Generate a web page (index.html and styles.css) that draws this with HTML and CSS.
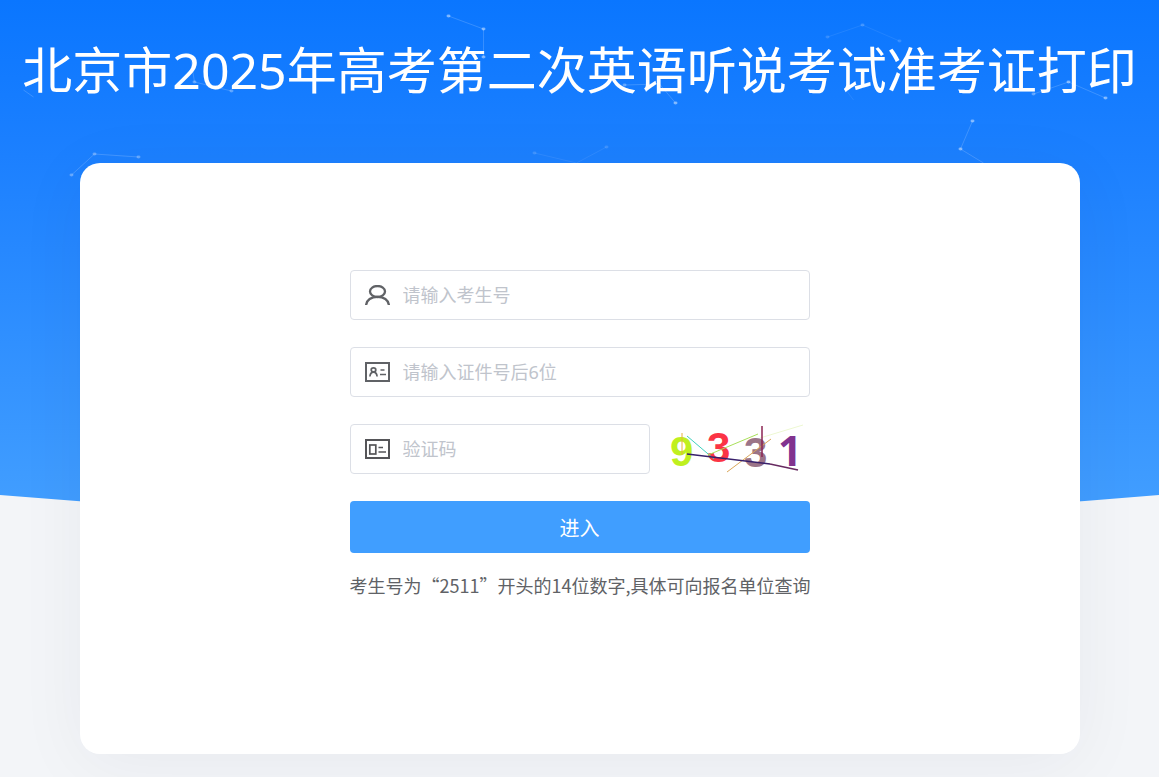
FILE: index.html
```html
<!DOCTYPE html>
<html lang="zh-CN">
  <head>
    <meta charset="UTF-8" />
    <meta name="viewport" content="width=device-width, initial-scale=1.0" />
    <title>北京市2025年高考第二次英语听说考试准考证打印</title>
    <link rel="stylesheet" href="styles.css">
  </head>
  <body>
    <div class="banner">
      <svg class="banner-shape" viewBox="0 0 1160 540" preserveAspectRatio="none" aria-hidden="true">
        <defs>
          <linearGradient id="sky" x1="0" y1="0" x2="0" y2="1">
            <stop offset="0" stop-color="#0a76ff" />
            <stop offset="0.3" stop-color="#1c80ff" />
            <stop offset="1" stop-color="#439fff" />
          </linearGradient>
        </defs>
        <path d="M0 0H1160V495Q580 545 0 495Z" fill="url(#sky)" />
      </svg>
      <svg class="banner-dots" viewBox="0 0 1160 200" preserveAspectRatio="xMidYMin slice" aria-hidden="true">
        <g fill="none" stroke="#fff" stroke-opacity="0.17">
          <path d="M72 175L95 154L139 157" />
          <path d="M24 90L34 97" />
          <path d="M191 57L195 82L232 91" />
          <path d="M449 16L484 29V57" />
          <path d="M625 85L660 84L676 103" />
          <path d="M535 153L577 163L607 147" stroke-opacity="0.08" />
          <path d="M828 37L863 25L900 41" stroke-opacity="0.08" />
          <path d="M845 88L854 100" stroke-opacity="0.08" />
          <path d="M1034 94L1069 82L1106 98" />
          <path d="M973 121L961 149L984 163" />
        </g>
        <g fill="#fff" fill-opacity="0.45">
          <ellipse cx="72" cy="175" rx="2" ry="1.4" fill-opacity="0.3" />
          <ellipse cx="95" cy="154" rx="2" ry="1.4" fill-opacity="0.3" />
          <ellipse cx="139" cy="157" rx="2" ry="1.4" fill-opacity="0.3" />
          <ellipse cx="195" cy="82" rx="2" ry="1.4" fill-opacity="0.3" />
          <ellipse cx="232" cy="91" rx="2" ry="1.4" fill-opacity="0.3" />
          <ellipse cx="449" cy="16" rx="2" ry="1.4" />
          <ellipse cx="484" cy="29" rx="2" ry="1.4" />
          <ellipse cx="484" cy="57" rx="2" ry="1.4" />
          <ellipse cx="625" cy="85" rx="2" ry="1.4" fill-opacity="0.3" />
          <ellipse cx="676" cy="103" rx="2" ry="1.4" />
          <ellipse cx="535" cy="153" rx="2" ry="1.4" fill-opacity="0.15" />
          <ellipse cx="607" cy="147" rx="2" ry="1.4" fill-opacity="0.15" />
          <ellipse cx="828" cy="37" rx="2" ry="1.4" fill-opacity="0.15" />
          <ellipse cx="863" cy="25" rx="2" ry="1.4" fill-opacity="0.2" />
          <ellipse cx="900" cy="41" rx="2" ry="1.4" fill-opacity="0.15" />
          <ellipse cx="1034" cy="94" rx="2" ry="1.4" fill-opacity="0.3" />
          <ellipse cx="1069" cy="82" rx="2" ry="1.4" />
          <ellipse cx="1106" cy="98" rx="2" ry="1.4" />
          <ellipse cx="973" cy="121" rx="2" ry="1.4" />
          <ellipse cx="961" cy="149" rx="2" ry="1.4" />
        </g>
      </svg>
    </div>
    <div class="page">
      <h1>北京市2025年高考第二次英语听说考试准考证打印</h1>
      <main class="card">
        <form class="login-form">
          <label class="field">
            <svg class="icon" viewBox="0 0 25 20" fill="none" stroke="#606266" stroke-width="2.3" aria-hidden="true">
              <ellipse cx="12.5" cy="6.5" rx="7.5" ry="5.5" />
              <path d="M1.1 20C1.6 15 6.2 11.8 12.5 11.8S23.4 15 23.9 20" />
            </svg>
            <input type="text" name="examineeNo" placeholder="请输入考生号" aria-label="考生号" />
          </label>
          <label class="field">
            <svg class="icon" viewBox="0 0 25 20" fill="none" stroke="#606266" stroke-width="2" aria-hidden="true">
              <rect x="1" y="1" width="23" height="18" />
              <ellipse cx="8.5" cy="7.9" rx="2.3" ry="2" stroke-width="1.7" />
              <path d="M4.9 14.5C5.2 11.8 6.4 10.2 8.5 10.2S11.8 11.8 12.1 14.5" stroke-width="1.7" />
              <path d="M15.5 8H19.5M15 12.5H21" stroke-width="1.7" />
            </svg>
            <input type="text" name="idNo" placeholder="请输入证件号后6位" aria-label="证件号后6位" />
          </label>
          <div class="captcha-row">
            <label class="field">
              <svg class="icon" viewBox="0 0 25 20" fill="none" stroke="#555558" stroke-width="2" aria-hidden="true">
                <rect x="1" y="1" width="23" height="18" />
                <rect x="4.8" y="6" width="6" height="9" stroke-width="1.7" />
                <path d="M13.5 8.5H18M13.5 13H21" stroke-width="1.7" />
              </svg>
              <input type="text" name="captcha" placeholder="验证码" aria-label="验证码" />
            </label>
            <button type="button" class="captcha" aria-label="刷新验证码">
              <svg viewBox="0 0 140 50">
                <text x="0" y="42" fill="#bff01f">9</text>
                <text x="37" y="38" fill="#fb3445">3</text>
                <text x="74" y="43" fill="#9b7488">3</text>
                <text class="digit-plain" x="108" y="42" fill="#81338f">1</text>
                <g fill="none" stroke-width="1">
                  <path d="M17 12L44 35" stroke="#3fd0bd" />
                  <path d="M38 31L88 10" stroke="#a9e05a" />
                  <path d="M90 14L133 1" stroke="#edf8d2" />
                  <path d="M57 48L101 15" stroke="#d9a659" />
                  <path d="M92 2V33" stroke="#8b2452" stroke-width="1.5" />
                  <path d="M12 9V31" stroke="#e6b23c" />
                  <path d="M17 30L100 40" stroke="#38206b" stroke-width="1.5" />
                  <path d="M100 40L128 46" stroke="#672a60" stroke-width="1.5" />
                </g>
              </svg>
            </button>
          </div>
          <button type="submit" class="submit-btn">进入</button>
        </form>
        <p class="hint">考生号为“2511”开头的14位数字,具体可向报名单位查询</p>
      </main>
    </div>
  </body>
</html>
```
FILE: styles.css
```css
* {
  box-sizing: border-box;
}
body {
  margin: 0;
  min-height: 100vh;
  font-family: "Noto Sans", "Noto Sans CJK SC", sans-serif;
  color: #606266;
  background-color: #f3f5f8;
}
/* decoration behind the page content */
.banner {
  position: absolute;
  top: 0;
  left: 0;
  width: 100%;
  z-index: -1;
}
.banner-shape {
  display: block;
  width: 100%;
  height: 540px;
}
.banner-dots {
  position: absolute;
  top: 0;
  left: 0;
  width: 100%;
  height: 200px;
}
.page {
  padding: 34px 16px 23px;
}
h1 {
  display: flex;
  justify-content: center;
  margin: 0 0 57px;
  color: #fff;
  font-size: 50px;
  font-weight: 400;
  line-height: 72px;
  white-space: nowrap;
}
.card {
  max-width: 1000px;
  margin: 0 auto;
  padding: 107px 20px 155px;
  background-color: #fff;
  border-radius: 20px;
  box-shadow: 0 10px 70px rgba(0, 0, 60, 0.05);
}
.login-form {
  display: flex;
  flex-direction: column;
  gap: 27px;
  max-width: 460px;
  margin: 0 auto;
}
.field {
  display: flex;
  align-items: center;
  gap: 13px;
  height: 50px;
  padding: 0 14px;
  border: 1px solid #dcdfe6;
  border-radius: 4px;
  background-color: #fff;
}
.icon {
  flex: none;
  width: 25px;
  height: 20px;
}
.field:focus-within {
  border-color: #409eff;
}
.field input {
  flex: 1;
  min-width: 0;
  height: 48px;
  padding: 0;
  border: none;
  outline: none;
  background: none;
  color: #606266;
  font-family: inherit;
  font-size: 18px;
}
.field input::placeholder {
  color: #c0c4cc;
}
.captcha-row {
  display: flex;
  gap: 20px;
}
.captcha-row .field {
  flex: 1;
  min-width: 0;
}
.captcha {
  flex: none;
  width: 140px;
  height: 50px;
  padding: 0;
  border: none;
  background: none;
  cursor: pointer;
}
.captcha svg {
  display: block;
  width: 100%;
  height: 100%;
  overflow: visible;
}
.captcha text {
  font-family: "Liberation Sans", Arial, sans-serif;
  font-size: 42px;
  font-weight: 700;
}
.captcha .digit-plain {
  font-family: "Open Sans", sans-serif;
}
.submit-btn {
  height: 52px;
  border: none;
  border-radius: 4px;
  background-color: #409eff;
  color: #fff;
  font-family: inherit;
  font-size: 20px;
  cursor: pointer;
}
.submit-btn:hover {
  background-color: #66b1ff;
}
.hint {
  max-width: 460px;
  margin: 18px auto 0;
  font-family: "Noto Sans CJK SC", sans-serif;
  font-size: 18px;
  line-height: 28px;
  white-space: nowrap;
}
```
